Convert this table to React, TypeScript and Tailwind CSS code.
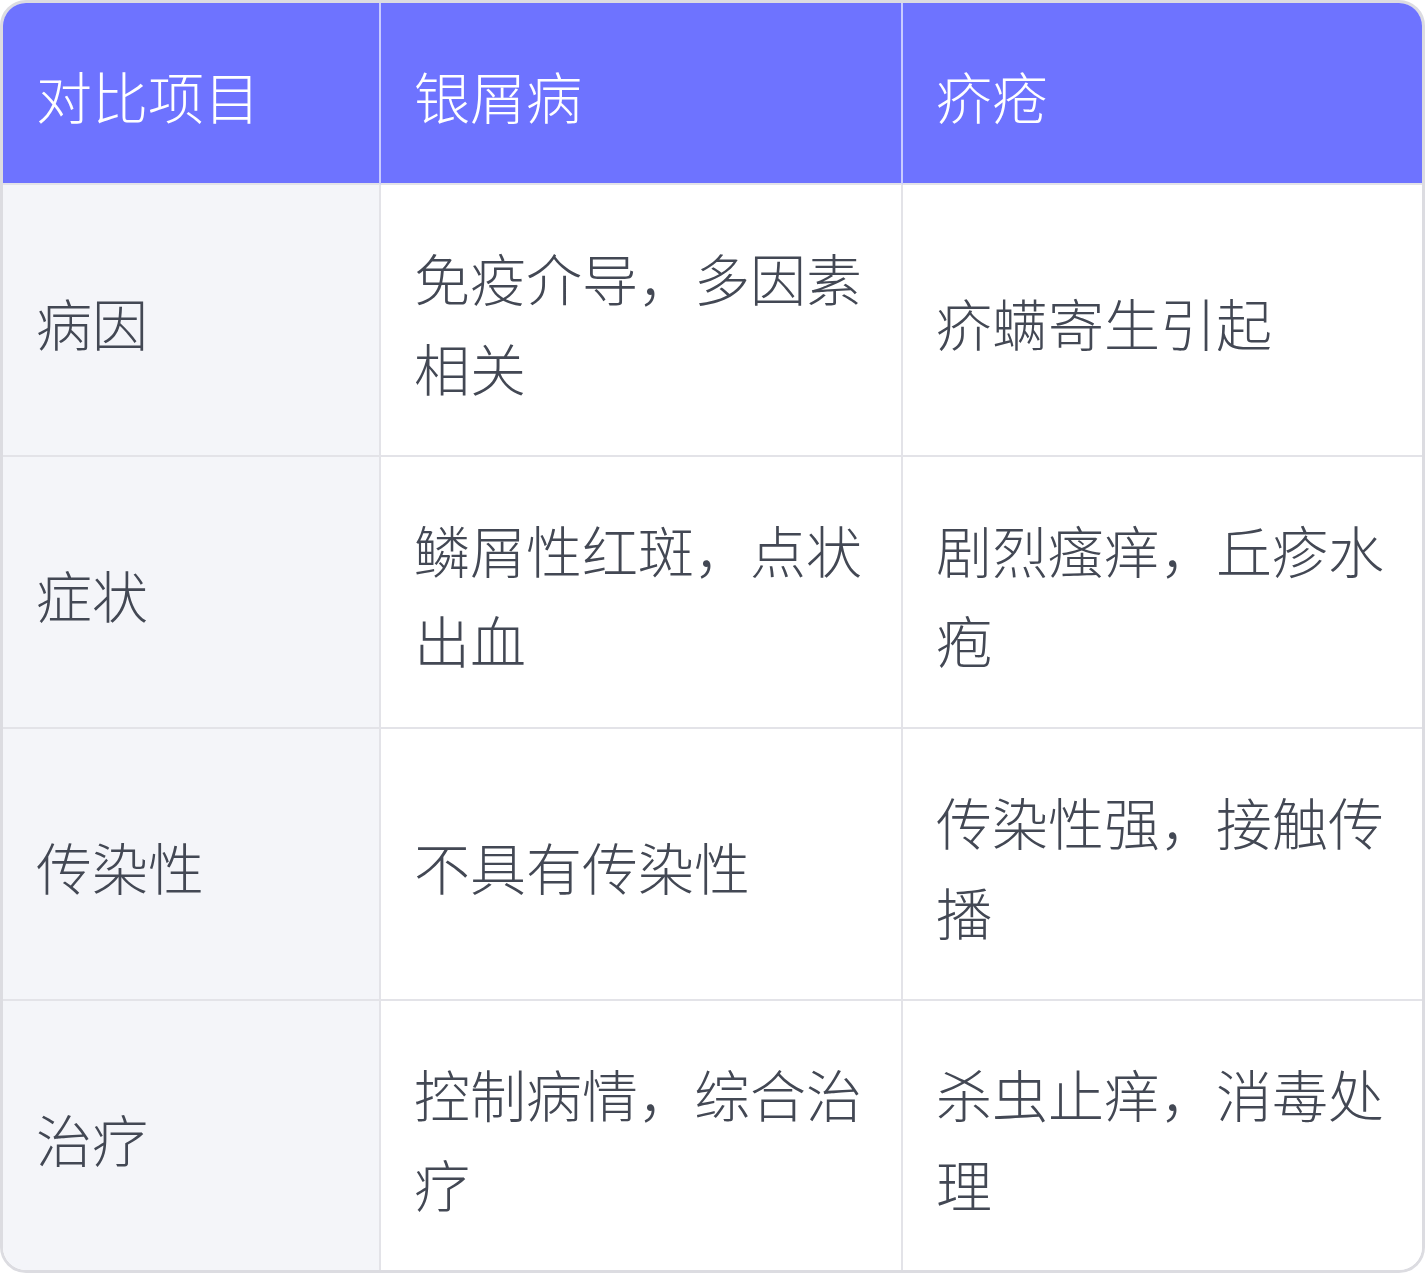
import React from "react";

const rows: [string, string, string][] = [
  ["病因", "免疫介导，多因素相关", "疥螨寄生引起"],
  ["症状", "鳞屑性红斑，点状出血", "剧烈瘙痒，丘疹水疱"],
  ["传染性", "不具有传染性", "传染性强，接触传播"],
  ["治疗", "控制病情，综合治疗", "杀虫止痒，消毒处理"],
];

export default function App() {
  const font = { fontFamily: '"Noto Sans CJK SC", "Noto Sans", sans-serif' };
  return (
    <div className="w-[1425px] h-[1273px] bg-white" style={font}>
      <div className="w-full h-full border-[3px] border-[#dcdce1] rounded-[26px] overflow-hidden grid grid-cols-[378px_522px_519px] grid-rows-[182px_272px_272px_272px_1fr] text-[56px] leading-[90px] font-light">
        {["对比项目", "银屑病", "疥疮"].map((h, i) => (
          <div
            key={h}
            className={`bg-[#6e73ff] text-white flex items-center pl-[33px] pr-[28px] pt-[4px] border-b-2 border-[#e3e3e8] ${i < 2 ? "border-r-2 border-r-[#c9cbff]" : ""}`}
          >
            {h}
          </div>
        ))}
        {rows.map((r, ri) => (
          <React.Fragment key={ri}>
            {r.map((c, ci) => (
              <div
                key={ci}
                className={`flex items-center pl-[33px] pr-[28px] pt-[4px] text-[#434854] border-[#e3e3e8] ${ci === 0 ? "bg-[#f4f5f9]" : "bg-white"} ${ci < 2 ? "border-r-2" : ""} ${ri < 3 ? "border-b-2" : ""}`}
              >
                <span>{c}</span>
              </div>
            ))}
          </React.Fragment>
        ))}
      </div>
    </div>
  );
}
